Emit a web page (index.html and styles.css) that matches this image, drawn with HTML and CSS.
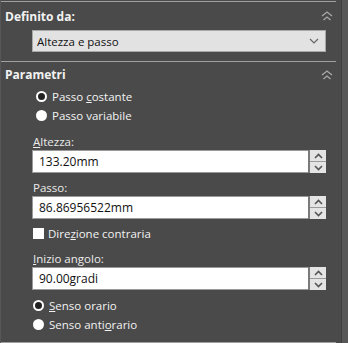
FILE: index.html
```html
<!DOCTYPE html>
<html lang="it">
<head>
    <meta charset="UTF-8">
    <title>Elica</title>
    <link rel="stylesheet" href="styles.css">
</head>
<body>
    <div class="window">
        <div class="panel">
            <div class="rule"></div>

            <!-- Definito da -->
            <div class="head">
                <span>Definito da:</span>
                <svg class="fold" width="12" height="10" viewBox="0 0 12 10"><path d="M1 5 L6 1 L11 5 M2.5 9 L6 6 L9.5 9" fill="none" stroke="#a8a8a8" stroke-width="1.3"/></svg>
            </div>
            <div class="select">
                <span>Altezza e passo</span>
                <svg width="10" height="6" viewBox="0 0 10 6"><path d="M1 1 L5 5 L9 1" fill="none" stroke="#666" stroke-width="1.2"/></svg>
            </div>

            <div class="rule sep"></div>

            <!-- Parametri -->
            <div class="head head2">
                <span>Parametri</span>
                <svg class="fold" width="12" height="10" viewBox="0 0 12 10"><path d="M1 5 L6 1 L11 5 M2.5 9 L6 6 L9.5 9" fill="none" stroke="#a8a8a8" stroke-width="1.3"/></svg>
            </div>

            <div class="opt first"><span class="radio on"></span><span>Passo <u>c</u>ostante</span></div>
            <div class="opt"><span class="radio"></span><span>Passo variabile</span></div>

            <div class="label gap8"><span><u>A</u>ltezza:</span></div>
            <div class="field">
                <div class="input">133.20mm</div>
                <div class="spin">
                    <div class="btn"><svg width="9" height="6" viewBox="0 0 9 6"><path d="M1 5 L4.5 1.5 L8 5" fill="none" stroke="#555" stroke-width="1.6"/></svg></div>
                    <div class="btn"><svg width="9" height="6" viewBox="0 0 9 6"><path d="M1 1 L4.5 4.5 L8 1" fill="none" stroke="#555" stroke-width="1.6"/></svg></div>
                </div>
            </div>

            <div class="label gap6"><span>Passo:</span></div>
            <div class="field">
                <div class="input">86.86956522mm</div>
                <div class="spin">
                    <div class="btn"><svg width="9" height="6" viewBox="0 0 9 6"><path d="M1 5 L4.5 1.5 L8 5" fill="none" stroke="#555" stroke-width="1.6"/></svg></div>
                    <div class="btn"><svg width="9" height="6" viewBox="0 0 9 6"><path d="M1 1 L4.5 4.5 L8 1" fill="none" stroke="#555" stroke-width="1.6"/></svg></div>
                </div>
            </div>

            <div class="check"><span class="box"></span><span>Dire<u>z</u>ione contraria</span></div>

            <div class="label gap8"><span><u>I</u>nizio angolo:</span></div>
            <div class="field">
                <div class="input">90.00gradi</div>
                <div class="spin">
                    <div class="btn"><svg width="9" height="6" viewBox="0 0 9 6"><path d="M1 5 L4.5 1.5 L8 5" fill="none" stroke="#555" stroke-width="1.6"/></svg></div>
                    <div class="btn"><svg width="9" height="6" viewBox="0 0 9 6"><path d="M1 1 L4.5 4.5 L8 1" fill="none" stroke="#555" stroke-width="1.6"/></svg></div>
                </div>
            </div>

            <div class="opt second top"><span class="radio on"></span><span><u>S</u>enso orario</span></div>
            <div class="opt second"><span class="radio"></span><span>Senso anti<u>o</u>rario</span></div>

            <div class="fill"></div>
            <div class="rule"></div>
        </div>
        <div class="strip"></div>
    </div>
</body>
</html>
```

FILE: styles.css
```css
body {
    margin: 0;
    background-color: #4a4a4a;
    font-family: "Open Sans", Arial, sans-serif;
    font-size: 11.5px;
    color: #f2f2f2;
}

.window {
    display: flex;
    width: 348px;
    height: 343px;
}

.panel {
    width: 342px;
    height: 343px;
    display: flex;
    flex-direction: column;
    border-left: 1px solid #575757;
    box-sizing: border-box;
    border-right: 1px solid #3f3f3f;
}

.strip {
    width: 6px;
    background-color: #575757;
}

.rule {
    height: 1px;
    margin-top: 1px;
    margin-right: 5px;
    background-color: #a0a0a0;
}

.rule.sep {
    margin-top: 9px;
}

.head {
    height: 28px;
    display: flex;
    align-items: center;
    justify-content: space-between;
    padding: 0 8px 0 4px;
    font-weight: bold;
    font-size: 12px;
}

.head2 {
    height: 25px;
}

.select {
    margin-left: 31px;
    width: 294px;
    height: 22px;
    box-sizing: border-box;
    border: 1px solid #a8a8a8;
    background-color: #e2e2e2;
    color: #111;
    display: flex;
    align-items: center;
    justify-content: space-between;
    padding: 0 6px 0 4px;
}

.opt {
    height: 19px;
    display: flex;
    align-items: center;
    padding-left: 35px;
}

.opt.second {
    padding-left: 32px;
}

.opt.top {
    margin-top: 6px;
}

.radio {
    width: 11px;
    height: 11px;
    border-radius: 50%;
    background-color: #fff;
    margin-right: 5px;
    box-sizing: border-box;
}

.radio.on {
    background-color: #222;
    border: 2.5px solid #fff;
}

.label {
    height: 17px;
    display: flex;
    align-items: center;
    padding-left: 32px;
    color: #ececec;
}

.gap8 {
    margin-top: 8px;
}

.gap6 {
    margin-top: 6px;
}

.field {
    display: flex;
    margin-left: 31px;
    height: 23px;
}

.input {
    width: 276px;
    box-sizing: border-box;
    border: 1px solid #9a9a9a;
    border-right: none;
    background-color: #fff;
    color: #111;
    font-size: 12px;
    display: flex;
    align-items: center;
    padding-left: 6px;
}

.spin {
    width: 18px;
    display: flex;
    flex-direction: column;
    border-left: 2px solid #7a7a7a;
    box-sizing: border-box;
}

.btn {
    flex: 1;
    background-color: #e4e4e4;
    display: flex;
    align-items: center;
    justify-content: center;
}

.btn + .btn {
    border-top: 1px solid #9a9a9a;
}

.check {
    margin-top: 5px;
    height: 18px;
    display: flex;
    align-items: center;
    padding-left: 32px;
}

.box {
    width: 11px;
    height: 11px;
    background-color: #fff;
    margin-right: 4px;
}

.fill {
    flex: 1;
}

u {
    text-underline-offset: 1px;
}
```
